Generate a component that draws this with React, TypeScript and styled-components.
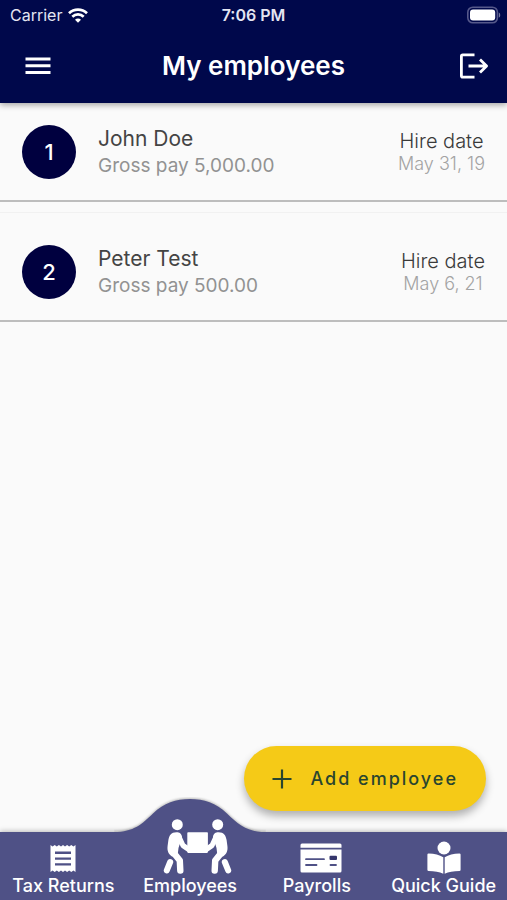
import React from "react";
import styled, { createGlobalStyle } from "styled-components";

const GlobalStyle = createGlobalStyle`
  * { box-sizing: border-box; }
  body {
    margin: 0;
    background: #fafafa;
    font-family: Inter, "Liberation Sans", sans-serif;
  }
  button { font: inherit; color: inherit; border: 0; padding: 0; background: none; cursor: pointer; }
`;

const Screen = styled.div`
  min-height: 100vh;
  display: flex;
  flex-direction: column;
  background: #fafafa;
`;

const Header = styled.header`
  position: relative;
  z-index: 1;
  padding-bottom: 1px;
  background: #00084b;
  color: #fff;
  box-shadow: 0 2px 6px rgba(0, 0, 0, 0.35);
`;

const StatusBar = styled.div`
  display: grid;
  grid-template-columns: 1fr auto 1fr;
  align-items: center;
  height: 30px;
  padding: 0 6px;
  font-size: 16px;
  line-height: 30px;
`;

const Carrier = styled.div`
  display: flex;
  align-items: center;
  gap: 6px;
  padding-left: 4px;
  color: #e4e5f2;
`;

const Clock = styled.time`
  font-weight: 600;
  color: #e4e5f2;
`;

const Battery = styled.div`
  display: flex;
  justify-content: flex-end;
`;

const Toolbar = styled.div`
  display: grid;
  grid-template-columns: 40px 1fr 40px;
  align-items: center;
  height: 72px;
  padding: 0 18px;
`;

const IconButton = styled.button<{ $align: string }>`
  display: flex;
  justify-content: ${(p) => p.$align};
`;

const Title = styled.h1`
  margin: 0;
  font-size: 26px;
  line-height: 32px;
  font-weight: 600;
  text-align: center;
`;

const EmployeeList = styled.ul`
  flex: 1;
  display: flex;
  flex-direction: column;
  gap: 10px;
  margin: -11px 0 0;
  padding: 0;
  list-style: none;
`;

const EmployeeRow = styled.li`
  display: flex;
  align-items: center;
  gap: 22px;
  padding: 32px 22px 21px;
  border-top: 1px solid #f1f1f1;
  border-bottom: 2px solid #bdbdbd;
`;

const NumberBadge = styled.div`
  display: flex;
  align-items: center;
  justify-content: center;
  width: 54px;
  height: 54px;
  border-radius: 50%;
  background: #00003f;
  color: #fff;
  font-size: 22px;
  font-weight: 500;
`;

const Details = styled.div`
  flex: 1;
`;

const HireInfo = styled.div`
  text-align: center;
`;

const Name = styled.div`
  font-size: 21px;
  line-height: 28px;
  color: #444;
`;

const GrossPay = styled.div`
  font-size: 19px;
  line-height: 26px;
  color: #929292;
`;

const HireLabel = styled.div`
  font-size: 20px;
  line-height: 24px;
  font-weight: 300;
  color: #3a3a3a;
`;

const HireDate = styled.div`
  font-size: 18px;
  line-height: 22px;
  font-weight: 300;
  color: #a3a3a3;
`;

const Footer = styled.footer`
  position: sticky;
  bottom: 0;
`;

const ActionArea = styled.div`
  display: flex;
  justify-content: flex-end;
  padding: 0 21px 21px;
`;

const AddButton = styled.button`
  && {
    display: flex;
    align-items: center;
    gap: 18px;
    height: 65px;
    padding: 0 28px;
    border-radius: 33px;
    background: #f5ca17;
    color: #29452f;
    font-size: 18px;
    font-weight: 500;
    letter-spacing: 2px;
    box-shadow: 0 5px 8px rgba(0, 0, 0, 0.3);
  }
`;

const Nav = styled.nav`
  display: grid;
  grid-template-columns: repeat(4, 1fr);
  grid-template-rows: 68px;
  background: #4f5186;
  box-shadow: 0 -1px 5px rgba(0, 0, 0, 0.25);
`;

const NavButton = styled.button`
  position: relative;
  display: flex;
  flex-direction: column;
  align-items: center;
  justify-content: flex-end;
  && {
    padding-bottom: 2px;
    color: #fff;
    font-size: 18px;
    line-height: 24px;
    font-weight: 500;
    white-space: nowrap;
  }
  svg { position: relative; flex: none; }
`;

const Hump = styled.div`
  position: absolute;
  bottom: 67px;
  left: 50%;
  width: 152px;
  height: 36px;
  margin-left: -76px;
  color: #4f5186;
  svg { display: block; }
  path { filter: drop-shadow(0 -1px 1px rgba(0, 0, 0, 0.25)); }
`;

const WifiIcon = () => (
  <svg width="20" height="15" viewBox="0 0 20 15" fill="none" stroke="#fff" strokeWidth="2.7" aria-hidden="true">
    <path d="M1 5.3a13 13 0 0 1 18 0" />
    <path d="M4.3 8.7a8.2 8.2 0 0 1 11.4 0" />
    <path d="M10 14.8l-3-3.1a4.2 4.2 0 0 1 6 0z" fill="#fff" stroke="none" />
  </svg>
);

const BatteryIcon = () => (
  <svg width="34" height="18" viewBox="0 0 34 18" aria-label="Battery full" role="img">
    <rect x="0.8" y="1.2" width="29.6" height="15.6" rx="5" fill="none" stroke="#55588a" strokeWidth="1.6" />
    <rect x="3" y="3.4" width="25.2" height="11.2" rx="3" fill="#fff" />
    <path d="M31.8 6.4c1.9.8 1.9 4.4 0 5.2z" fill="#75789f" />
  </svg>
);

const MenuIcon = () => (
  <svg width="26" height="18" viewBox="0 0 26 18" fill="#fff" aria-hidden="true">
    <path d="M0.5 0.5h25v3h-25zM0.5 7.3h25v3h-25zM0.5 14h25v3h-25z" />
  </svg>
);

const LogoutIcon = () => (
  <svg width="30" height="26" viewBox="0 0 30 26" fill="none" stroke="#fff" strokeWidth="2.8" strokeLinejoin="round" aria-hidden="true">
    <path d="M15.5 1.9H3.8Q2.4 1.9 2.4 3.3V22.7Q2.4 24.1 3.8 24.1H15.5" />
    <path d="M9.5 13H27.5M21 6.5L27.6 13L21 19.5" />
  </svg>
);

const PlusIcon = () => (
  <svg width="20" height="20" viewBox="0 0 20 20" fill="none" stroke="currentColor" strokeWidth="2.2" aria-hidden="true">
    <path d="M10 0.5v19M0.5 10h19" />
  </svg>
);

const ReceiptIcon = () => (
  <svg width="26" height="30" viewBox="0 0 26 30" aria-hidden="true">
    <path
      fill="#fff"
      d="M0.5 1L2.6 2.4L4.7 1L6.8 2.4L8.9 1L11 2.4L13 1L15 2.4L17.1 1L19.2 2.4L21.3 1L23.4 2.4L25.5 1V28L23.4 26.4L21.3 28L19.2 26.4L17.1 28L15 26.4L13 28L11 26.4L8.9 28L6.8 26.4L4.7 28L2.6 26.4L0.5 28Z"
    />
    <path stroke="#4f5186" strokeWidth="2.4" d="M5 8.8h16M5 14.6h16M5 20.4h16" />
  </svg>
);

const PayrollIcon = () => (
  <svg width="50" height="31" viewBox="-8 0 50 31" aria-hidden="true">
    <path fill="#fff" d="M2 0.5h38q1.5 0 1.5 1.5v2.7h-41V2q0-1.5 1.5-1.5zM0.5 6.6h41V28q0 1.5-1.5 1.5H2Q0.5 29.5 0.5 28z" />
    <path stroke="#4f5186" strokeWidth="1.8" strokeLinecap="round" d="M6 16.2h18M6 22h10.5M30.5 22h5.5" />
    <rect x="29.5" y="12.8" width="7.5" height="4.2" rx="1" fill="#35366c" />
  </svg>
);

const GuideIcon = () => (
  <svg width="34" height="34" viewBox="0 0 34 34" fill="#fff" aria-hidden="true">
    <circle cx="17" cy="8" r="6.5" />
    <path d="M1.6 13.4Q10.5 13.4 16.3 17.2V33.8Q10.5 31 1.6 31Q0.4 31 0.4 29.8V14.6Q0.4 13.4 1.6 13.4zM32.4 13.4Q23.5 13.4 17.7 17.2V33.8Q23.5 31 32.4 31Q33.6 31 33.6 29.8V14.6Q33.6 13.4 32.4 13.4z" />
  </svg>
);

const Carrying = () => (
  <g fill="none" stroke="#fff" strokeLinecap="round" strokeLinejoin="round">
    <circle cx="14.3" cy="5.7" r="5.5" fill="#fff" stroke="none" />
    <path d="M13.5 13.2C8 13.2 6.2 16.5 5.4 21L4.6 27C4 32 5.5 35 9 37.5L14.5 37L15.5 29L19 18C18.5 14.5 16.5 13.2 13.5 13.2Z" fill="#fff" stroke="none" />
    <path d="M15.8 17.5L20 26.5L27 31.3" strokeWidth="5.2" />
    <path d="M10 33L16.8 41.5L17.3 51.6" strokeWidth="6.4" />
    <path d="M7.2 43L3.8 51.4" strokeWidth="6" />
  </g>
);

const CarryIcon = () => (
  <svg width="83" height="55" viewBox="-14 0 83 55" aria-hidden="true">
    <Carrying />
    <g transform="matrix(-1 0 0 1 69 0)">
      <Carrying />
    </g>
    <rect x="24.3" y="13.3" width="20.6" height="20.6" rx="0.8" fill="#fff" />
  </svg>
);

const HumpShape = () => (
  <Hump>
    <svg width="152" height="36" viewBox="0 0 152 36" aria-hidden="true">
      <path
        fill="currentColor"
        d="M0 36V35C20 35 28 27 39 16.5C50 6 62 2 76 2S102 6 113 16.5C124 27 132 35 152 35V36Z"
      />
    </svg>
  </Hump>
);

const employees = [
  { id: 1, name: "John Doe", pay: "5,000.00", hired: "May 31, 19" },
  { id: 2, name: "Peter Test", pay: "500.00", hired: "May 6, 21" },
];

export default function App() {
  return (
    <Screen>
      <GlobalStyle />
      <Header>
        <StatusBar>
          <Carrier>
            Carrier
            <WifiIcon />
          </Carrier>
          <Clock>7:06 PM</Clock>
          <Battery>
            <BatteryIcon />
          </Battery>
        </StatusBar>
        <Toolbar>
          <IconButton $align="center" aria-label="Menu">
            <MenuIcon />
          </IconButton>
          <Title>My employees</Title>
          <IconButton $align="flex-end" aria-label="Log out">
            <LogoutIcon />
          </IconButton>
        </Toolbar>
      </Header>
      <EmployeeList>
        {employees.map((employee) => (
          <EmployeeRow key={employee.id}>
            <NumberBadge>{employee.id}</NumberBadge>
            <Details>
              <Name>{employee.name}</Name>
              <GrossPay>Gross pay {employee.pay}</GrossPay>
            </Details>
            <HireInfo>
              <HireLabel>Hire date</HireLabel>
              <HireDate>{employee.hired}</HireDate>
            </HireInfo>
          </EmployeeRow>
        ))}
      </EmployeeList>
      <Footer>
        <ActionArea>
          <AddButton>
            <PlusIcon />
            Add employee
          </AddButton>
        </ActionArea>
        <Nav>
          <NavButton>
            <ReceiptIcon />
            Tax Returns
          </NavButton>
          <NavButton aria-current="page">
            <HumpShape />
            <CarryIcon />
            Employees
          </NavButton>
          <NavButton>
            <PayrollIcon />
            Payrolls
          </NavButton>
          <NavButton>
            <GuideIcon />
            Quick Guide
          </NavButton>
        </Nav>
      </Footer>
    </Screen>
  );
}
